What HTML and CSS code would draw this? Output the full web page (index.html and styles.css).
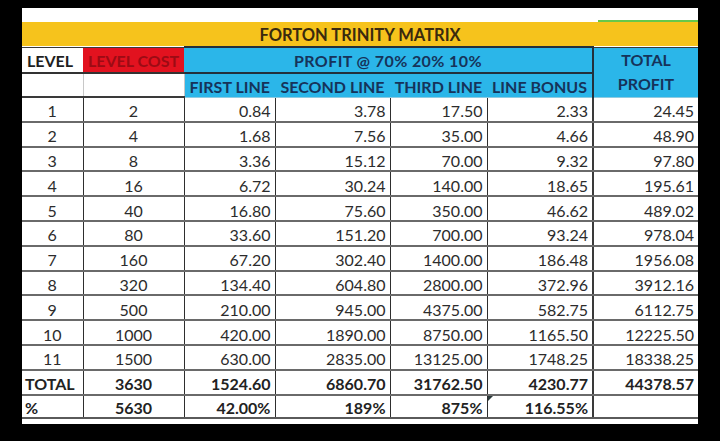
FILE: index.html
```html
<!DOCTYPE html>
<html>
<head>
<meta charset="utf-8">
<link rel="stylesheet" href="styles.css">
</head>
<body>
<div class="frame">
  <div class="sheet">
    <div class="topline"><span class="green"></span></div>
    <table class="matrix">
      <colgroup>
        <col class="c-level"><col class="c-cost"><col class="c-first"><col class="c-second"><col class="c-third"><col class="c-bonus"><col class="c-total">
      </colgroup>
      <tr class="r-title"><td colspan="7" class="title">FORTON TRINITY MATRIX</td></tr>
      <tr class="r-head1">
        <td class="h-level">LEVEL</td>
        <td class="h-cost">LEVEL COST</td>
        <td colspan="4" class="h-profit">PROFIT @ 70% 20% 10%</td>
        <td rowspan="2" class="h-total">TOTAL<br>PROFIT</td>
      </tr>
      <tr class="r-head2">
        <td class="h-blank"></td>
        <td class="h-blank"></td>
        <td class="h-sub">FIRST LINE</td>
        <td class="h-sub">SECOND LINE</td>
        <td class="h-sub">THIRD LINE</td>
        <td class="h-sub h-last">LINE BONUS</td>
      </tr>
      <tr class="data"><td class="ctr">1</td><td class="ctr">2</td><td>0.84</td><td>3.78</td><td>17.50</td><td class="sep">2.33</td><td>24.45</td></tr>
      <tr class="data"><td class="ctr">2</td><td class="ctr">4</td><td>1.68</td><td>7.56</td><td>35.00</td><td class="sep">4.66</td><td>48.90</td></tr>
      <tr class="data"><td class="ctr">3</td><td class="ctr">8</td><td>3.36</td><td>15.12</td><td>70.00</td><td class="sep">9.32</td><td>97.80</td></tr>
      <tr class="data"><td class="ctr">4</td><td class="ctr">16</td><td>6.72</td><td>30.24</td><td>140.00</td><td class="sep">18.65</td><td>195.61</td></tr>
      <tr class="data"><td class="ctr">5</td><td class="ctr">40</td><td>16.80</td><td>75.60</td><td>350.00</td><td class="sep">46.62</td><td>489.02</td></tr>
      <tr class="data"><td class="ctr">6</td><td class="ctr">80</td><td>33.60</td><td>151.20</td><td>700.00</td><td class="sep">93.24</td><td>978.04</td></tr>
      <tr class="data"><td class="ctr">7</td><td class="ctr">160</td><td>67.20</td><td>302.40</td><td>1400.00</td><td class="sep">186.48</td><td>1956.08</td></tr>
      <tr class="data"><td class="ctr">8</td><td class="ctr">320</td><td>134.40</td><td>604.80</td><td>2800.00</td><td class="sep">372.96</td><td>3912.16</td></tr>
      <tr class="data"><td class="ctr">9</td><td class="ctr">500</td><td>210.00</td><td>945.00</td><td>4375.00</td><td class="sep">582.75</td><td>6112.75</td></tr>
      <tr class="data"><td class="ctr">10</td><td class="ctr">1000</td><td>420.00</td><td>1890.00</td><td>8750.00</td><td class="sep">1165.50</td><td>12225.50</td></tr>
      <tr class="data"><td class="ctr">11</td><td class="ctr">1500</td><td>630.00</td><td>2835.00</td><td>13125.00</td><td class="sep">1748.25</td><td>18338.25</td></tr>
      <tr class="data bold r-total"><td class="lbl">TOTAL</td><td class="ctr">3630</td><td>1524.60</td><td>6860.70</td><td>31762.50</td><td class="sep">4230.77</td><td>44378.57</td></tr>
      <tr class="data bold r-pct"><td class="lbl">%</td><td class="ctr">5630</td><td>42.00%</td><td>189%</td><td>875%</td><td class="sep marked">116.55%</td><td></td></tr>
    </table>
  </div>
</div>
</body>
</html>
```

FILE: styles.css
```css
html, body {
  margin: 0;
  padding: 0;
  background: #000;
}
.frame {
  width: 720px;
  height: 441px;
  padding-top: 8px;
  padding-left: 22px;
  box-sizing: border-box;
}
.sheet {
  width: 676px;
  height: 416px;
  background: #fff;
  overflow: hidden;
  font-family: Lato, "Open Sans", sans-serif;
  color: #2c2c2c;
}
.topline {
  height: 14px;
  display: flex;
  align-items: flex-end;
}
.green {
  display: block;
  margin-left: 576px;
  width: 100px;
  height: 2px;
  background: #67c84a;
}
.matrix {
  border-collapse: collapse;
  table-layout: fixed;
  width: 676px;
}
.c-level { width: 61px; }
.c-cost { width: 101px; }
.c-first { width: 91px; }
.c-second { width: 115px; }
.c-third { width: 97px; }
.c-bonus { width: 106px; }
.c-total { width: 105px; }

.matrix td {
  padding: 0;
  line-height: 1;
  white-space: nowrap;
  overflow: hidden;
  box-sizing: border-box;
}
.title {
  background: #f6c31c;
  color: #3a2a0e;
  font-weight: 700;
  font-size: 16.5px;
  text-align: center;
  height: 25px;
  padding-top: 2px !important;
  border-bottom: 1px solid #3a3a3a;
}
.r-head1 td {
  height: 26px;
  font-weight: 700;
  font-size: 16px;
  padding-top: 2px;
}
.h-level {
  background: #fff;
  color: #1e1e1e;
  text-align: left;
  padding-left: 5px !important;
  border-bottom: 2px solid #333;
}
.h-cost {
  background: #e2121f;
  color: #9c0b14;
  text-align: center;
  border-bottom: 2px solid #333;
}
.h-profit {
  background: #2bb6e9;
  color: #16335a;
  text-align: center;
  letter-spacing: 0.4px;
  border: 2px solid #23303c;
  border-left: none;
}
.h-total {
  background: #2bb6e9;
  color: #16335a;
  text-align: center;
  line-height: 24px !important;
  padding-top: 0 !important;
  border-bottom: 1px solid #8fcbe0;
}
.r-head2 td {
  height: 24px;
  font-weight: 700;
  font-size: 16px;
  padding-top: 3px;
}
.h-blank {
  background: #fff;
  border-bottom: 2px solid #3a3a3a;
  border-right: 1px solid #c8c8c8;
}
.h-sub {
  background: #2bb6e9;
  color: #16335a;
  text-align: center;
  border-bottom: 1px solid #8fcbe0;
}
.h-last {
  border-right: 2px solid #23303c;
}
.data td {
  height: 24.8px;
  font-size: 16px;
  text-align: right;
  padding: 4px 4px 0 0;
  border-bottom: 2px solid #6a6a6a;
  border-right: 1px solid #2e2e2e;
}
.data td.ctr {
  text-align: center;
  padding-right: 0;
}
.data td.lbl {
  text-align: left;
  padding-left: 3px;
}
.data td.sep {
  border-right: 2px solid #3a3a3a;
}
.data td:last-child {
  border-right: none;
}
.bold td {
  font-weight: 700;
  color: #222;
}
.r-total td {
  height: 25px;
}
.r-pct td {
  height: 23px;
  border-bottom: 2px solid #5a5a5a;
}
.marked {
  position: relative;
}
.marked::before {
  content: "";
  position: absolute;
  left: 0;
  top: 0;
  border-top: 5px solid #2b3a3a;
  border-right: 5px solid transparent;
}
```
